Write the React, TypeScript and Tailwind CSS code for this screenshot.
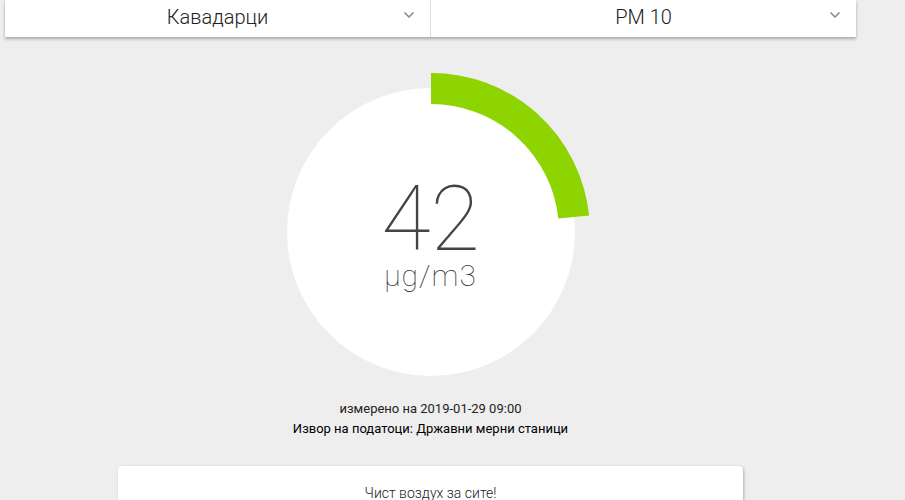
import { ChevronDown } from "lucide-react";

// Gauge arc scales to 180 µg/m3 for a full circle
const VALUE = 42;
const MAX = 180;

function arcPath(value: number, r: number, c: number) {
  const a = (Math.min(value, MAX - 0.01) / MAX) * Math.PI * 2;
  const x = c + r * Math.sin(a);
  const y = c - r * Math.cos(a);
  const large = a > Math.PI ? 1 : 0;
  return `M ${c} ${c - r} A ${r} ${r} 0 ${large} 1 ${x.toFixed(2)} ${y.toFixed(2)}`;
}

function Select({ label }: { label: string }) {
  return (
    <div className="relative flex flex-1 items-center justify-center pb-[3px]">
      <span className="text-[20px] font-light text-[#222]">{label}</span>
      <ChevronDown className="absolute right-[13px] top-[7px] text-[#8a8a8a]" size={16} strokeWidth={2.5} />
    </div>
  );
}

export default function App() {
  return (
    <div
      className="min-h-[500px] bg-[#eeeeee]"
      style={{ fontFamily: "Roboto, 'Noto Sans', sans-serif" }}
    >
      <div className="ml-[5px] w-[851px]">
        <div className="flex h-[37px] bg-white shadow-[0_2px_3px_rgba(0,0,0,0.3)]">
          <Select label="Кавадарци" />
          <div className="w-px bg-[#ddd]" />
          <Select label="PM 10" />
        </div>

        <div className="mt-[35px] flex justify-center">
          <div className="relative h-[320px] w-[320px]">
            <svg width="320" height="320" viewBox="0 0 320 320">
              <circle cx="160" cy="160" r="144" fill="#fff" />
              <path d={arcPath(VALUE, 143.5, 160)} fill="none" stroke="#8dd400" strokeWidth="31" />
            </svg>
            <div className="absolute inset-0 flex flex-col items-center pt-[108px]">
              <span className="text-[90px] font-thin leading-[80px] text-[#444]">{VALUE}</span>
              <span className="mt-[1px] text-[30px] font-thin leading-[30px] tracking-[1px] text-[#333]">µg/m3</span>
            </div>
          </div>
        </div>

        <div className="mt-[7px] flex flex-col items-center text-[13px] leading-[20px] text-[#222]">
          <p>измерено на 2019-01-29 09:00</p>
          <p className="text-black">Извор на податоци: Државни мерни станици</p>
        </div>

        <div className="mx-auto mt-[27px] w-[625px] rounded-[4px] bg-white pt-[17px] pb-[20px] text-center shadow-[1px_1px_3px_rgba(0,0,0,0.25)]">
          <p className="text-[14px] font-light text-[#222]">Чист воздух за сите!</p>
        </div>
      </div>
    </div>
  );
}
